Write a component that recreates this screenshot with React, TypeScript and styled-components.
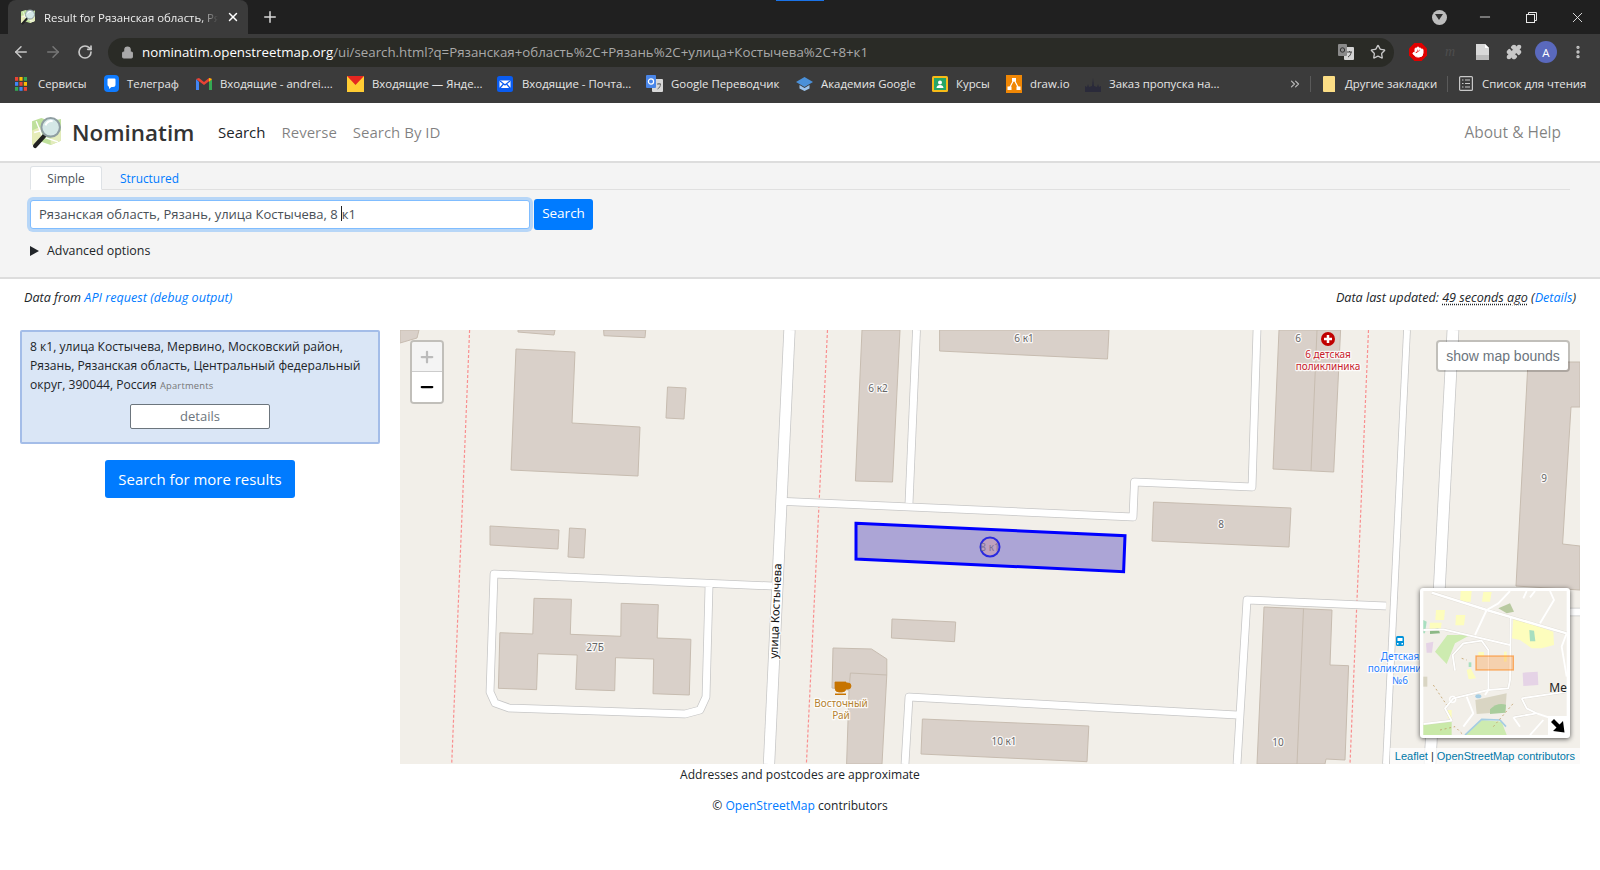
import React from "react";
import styled, { createGlobalStyle } from "styled-components";
import { ArrowLeft, ArrowRight, RotateCw, Lock, Star, Puzzle, Plus, X, Minus, EllipsisVertical, ChevronsRight, Hand } from "lucide-react";

const sans = `"Open Sans", "Noto Sans", sans-serif`;

const Global = createGlobalStyle`
  html, body { margin: 0; padding: 0; background: #fff; }
  body { font-family: ${sans}; width: 1600px; height: 870px; overflow: hidden; color: #212529; }
  * { box-sizing: border-box; }
`;

const Page = styled.div`display: flex; flex-direction: column; width: 1600px; height: 870px;`;

/* browser chrome */
const TabStrip = styled.div`position: relative; height: 34px; background: #202020; display: flex; align-items: flex-end; padding-left: 8px; color: #fff;`;
const Loading = styled.div`position: absolute; left: 776px; top: 0; width: 48px; height: 1px; background: #1a73e8;`;
const Tab = styled.div`
  width: 240px; height: 34px; background: #3b3b3b; border-radius: 8px 8px 0 0;
  display: flex; align-items: center; padding: 0 8px 0 12px; font-size: 11.4px; gap: 8px;
`;
const TabTitle = styled.span`
  flex: 1; overflow: hidden; white-space: nowrap; color: #eee;
  -webkit-mask-image: linear-gradient(90deg, #000 90%, transparent);
  mask-image: linear-gradient(90deg, #000 90%, transparent);
`;
const NewTab = styled.div`margin-left: 13px; display: flex; align-self: center; color: #d8d8d8;`;
const WinControls = styled.div`margin-left: auto; align-self: center; display: flex; align-items: center; color: #e8e8e8;`;
const WinButton = styled.div`width: 46px; display: flex; justify-content: center;`;
const ProfileDrop = styled.div`width: 15px; height: 15px; border-radius: 50%; background: #bdbdbd; display: flex; align-items: center; justify-content: center;`;
const DropTri = styled.div`width: 0; height: 0; border-left: 4px solid transparent; border-right: 4px solid transparent; border-top: 6px solid #303030;`;

const Toolbar = styled.div`height: 36px; background: #3b3b3b; display: flex; align-items: center; padding-left: 5px; color: #c8c8c8;`;
const NavButton = styled.div<{ $dim?: boolean }>`width: 32px; display: flex; justify-content: center; color: ${(p) => (p.$dim ? "#777" : "#c8c8c8")};`;
const Omnibox = styled.div`
  width: 1286px; height: 29px; margin-left: 7px; border-radius: 15px; background: #2a2b26;
  display: flex; align-items: center; padding: 0 8px 0 13px; font-size: 13.3px; white-space: nowrap; color: #a9a9a9;
`;
const LockWrap = styled.span`display: flex; margin-right: 8px; color: #a9a9a9;`;
const Host = styled.span`color: #fff;`;
const OmniIcons = styled.div`margin-left: auto; display: flex; align-items: center; gap: 16px; color: #c8c8c8;`;
const ExtRow = styled.div`display: flex; align-items: center; margin-left: 8px;`;
const Ext = styled.div`width: 32px; display: flex; justify-content: center; align-items: center; color: #c8c8c8;`;
const StopSign = styled.div`
  width: 18px; height: 18px; background: #e00000; color: #fff; display: flex; align-items: center; justify-content: center;
  clip-path: polygon(30% 0, 70% 0, 100% 30%, 100% 70%, 70% 100%, 30% 100%, 0 70%, 0 30%);
`;
const DimM = styled.span`font-style: italic; font-size: 14px; color: #4e4e4e; font-family: "Liberation Serif", serif;`;
const Avatar = styled.div`width: 22px; height: 22px; border-radius: 50%; background: #5a69bd; color: #fff; display: flex; align-items: center; justify-content: center; font-size: 11.5px;`;

const BookmarkBar = styled.div`height: 33px; background: #3b3b3b; display: flex; align-items: center; padding: 0 0 6px 15px; font-size: 11.4px; color: #e6e6e6; white-space: nowrap;`;
const Bookmark = styled.div<{ $w: number; $gap?: number; $ml?: number }>`
  width: ${(p) => p.$w}px; margin-left: ${(p) => p.$ml ?? 0}px; flex: none; display: flex; align-items: center; gap: ${(p) => p.$gap ?? 8}px;
`;
const BarSep = styled.div`width: 1px; height: 16px; background: #5a5a5a; flex: none;`;
const More = styled.div`margin-left: -2px; width: 22px; flex: none; color: #b9b9b9; display: flex;`;

/* site header */
const Header = styled.header`height: 60px; border-bottom: 2px solid #ddd; display: flex; align-items: center; padding: 0 39px 0 30px; background: #fff;`;
const Brand = styled.div`display: flex; align-items: center; font-size: 22.4px; font-weight: 600; color: #333; width: 188px; gap: 9px;`;
const NavLink = styled.a<{ $active?: boolean }>`font-size: 15px; color: ${(p) => (p.$active ? "#212529" : "rgba(0,0,0,.5)")}; margin-right: 16px;`;
const NavRight = styled.a`margin-left: auto; font-size: 15.5px; color: rgba(0,0,0,.5);`;

/* search */
const SearchPanel = styled.section`height: 116px; background: #f4f4f4; border-bottom: 2px solid #ddd; padding: 3px 30px 0; font-size: 13px;`;
const Tabs = styled.div`display: flex; height: 24px; border-bottom: 1px solid #e0e0e0;`;
const TabLink = styled.a<{ $active?: boolean }>`
  height: 24px; display: flex; align-items: center; justify-content: center; font-size: 11.9px;
  ${(p) => p.$active ? "width:72px;background:#fff;border:1px solid #dee2e6;border-bottom:1px solid #fff;border-radius:3px 3px 0 0;color:#495057;" : "color:#007bff;width:95px;"}
`;
const SearchRow = styled.div`display: flex; gap: 4px; margin-top: 9px; align-items: center;`;
const FakeInput = styled.div`
  width: 500px; height: 29px; background: #fff; border: 1px solid #80bdff; border-radius: 3px;
  box-shadow: 0 0 0 3px rgba(0,123,255,.25); padding: 0 8px 2px; display: flex; align-items: center; font-size: 13px; color: #495057; white-space: nowrap;
`;
const Caret = styled.span`display: inline-block; width: 1px; height: 15px; background: #222; margin: 0 0 0 3px; vertical-align: middle;`;
const SearchBtn = styled.div`width: 59px; height: 31px; background: #007bff; color: #fff; border-radius: 3px; font-size: 13.5px; display: flex; align-items: center; justify-content: center; padding-bottom: 3px;`;
const Advanced = styled.div`display: flex; align-items: center; gap: 8px; margin-top: 12px; font-size: 12.4px; color: #212529;`;
const Triangle = styled.span`width: 0; height: 0; border-top: 5.5px solid transparent; border-bottom: 5.5px solid transparent; border-left: 9px solid #212529;`;

const Meta = styled.div`height: 51px; display: flex; justify-content: space-between; align-items: flex-start; padding: 10px 24px 0 24px; font-size: 12.6px; line-height: 17px; font-style: italic; color: #212529;`;
const Link = styled.a`color: #007bff;`;
const Abbr = styled.span`text-decoration: underline dotted #212529; text-underline-offset: 2px;`;

const Content = styled.div`display: grid; grid-template-columns: 360px 1180px; column-gap: 20px; padding-left: 20px;`;
const Side = styled.div`display: flex; flex-direction: column; align-items: center;`;
const Result = styled.div`
  width: 360px; height: 114px; background: #dae6f6; border: 2px solid #a4bde8; border-radius: 2px;
  padding: 5px 8px; font-size: 12.1px; line-height: 19px; color: #212529;
`;
const Kind = styled.span`font-size: 9.4px; color: #777; letter-spacing: .2px;`;
const DetailsBtn = styled.div`width: 140px; height: 25px; margin: 9px auto 0; background: #fff; border: 1px solid #6c757d; border-radius: 2px; color: #6c757d; font-size: 13px; display: flex; align-items: center; justify-content: center;`;
const MoreBtn = styled.div`margin-top: 16px; width: 190px; height: 38px; background: #007bff; color: #fff; border-radius: 3px; font-size: 14.95px; display: flex; align-items: center; justify-content: center;`;

const MapBox = styled.div`position: relative; width: 1180px; height: 434px; overflow: hidden; background: #f2efe9;`;
const MapSvg = styled.svg`display: block; width: 1180px; height: 434px; font-family: "Noto Sans", "DejaVu Sans", sans-serif;`;
const ZoomCtl = styled.div`position: absolute; left: 10px; top: 10px; width: 34px; height: 64px; border: 2px solid rgba(0,0,0,.2); border-radius: 4px; background-clip: padding-box; overflow: hidden;`;
const ZoomBtn = styled.div<{ $off?: boolean }>`
  height: 30px; display: flex; align-items: center; justify-content: center; color: ${(p) => (p.$off ? "#bbb" : "#000")};
  background: ${(p) => (p.$off ? "#f4f4f4" : "#fff")}; ${(p) => p.$off && "border-bottom: 1px solid #ccc;"}
`;
const BoundsBtn = styled.div`position: absolute; right: 10px; top: 10px; width: 134px; height: 32px; background: #fff; border: 2px solid rgba(0,0,0,.2); border-radius: 4px; background-clip: padding-box; font-size: 14px; color: #6c757d; display: flex; align-items: center; justify-content: center; font-family: "Liberation Sans", sans-serif;`;
const Mini = styled.div`position: absolute; right: 10px; bottom: 26px; width: 150px; height: 150px; background: #fff; border-radius: 3px; padding: 3px; box-shadow: 0 1px 5px rgba(0,0,0,.65);`;
const MiniSvg = styled.svg`display: block; width: 144px; height: 144px; font-family: "Noto Sans", sans-serif;`;
const MiniToggle = styled.div`position: absolute; right: 3px; bottom: 3px; width: 19px; height: 19px; background: #fff; display: flex; align-items: center; justify-content: center;`;
const Attribution = styled.div`position: absolute; right: 0; bottom: 0; background: rgba(255,255,255,.7); padding: 0 5px; height: 16px; font-size: 11px; line-height: 16px; color: #333; font-family: "Liberation Sans", sans-serif;`;
const AttrLink = styled.a`color: #0078a8;`;

const Footer = styled.footer`text-align: center; font-size: 12.05px; color: #212529; padding-top: 1px;`;
const FootLine = styled.p<{ $mt: number }>`margin: ${(p) => p.$mt}px 0 0; line-height: 20px;`;

const Favicon = ({ size = 16 }: { size?: number }) => (
  <svg width={size} height={size} viewBox="0 0 32 32">
    <path d="M2 5 L11 2 L20 5 L30 3 L30 24 L20 28 L11 25 L2 28 Z" fill="#bfe09c" />
    <path d="M2 14 L11 10 L11 25 L2 28 Z" fill="#e6ecb8" />
    <path d="M20 18 L30 14 L30 24 L20 28 Z" fill="#e3ebbc" />
    <path d="M6 5 L12 20 M12 20 L27 25 M4 16 L12 14" stroke="#fff" strokeWidth="1.3" fill="none" />
    <path d="M14 19 L5 29" stroke="#222" strokeWidth="4.2" strokeLinecap="round" />
    <circle cx="20" cy="11" r="9" fill="#d6e8ee" fillOpacity=".9" stroke="#8f9ea2" strokeWidth="2" />
    <path d="M15 9 A6.5 6.5 0 0 1 22 5" stroke="#fff" strokeWidth="2" fill="none" />
  </svg>
);

const Apps = () => (
  <svg width="12" height="14" viewBox="0 0 12 14">
    {["#ea4335", "#fbbc05", "#34a853", "#4285f4", "#ea4335", "#fbbc05", "#34a853", "#4285f4", "#ea4335"].map((c, i) => (
      <rect key={i} x={(i % 3) * 4.4} y={Math.floor(i / 3) * 5} width="3.2" height="3.8" fill={c} />
    ))}
  </svg>
);
const Telegraph = () => (
  <svg width="15" height="17" viewBox="0 0 15 17"><rect width="15" height="17" rx="4" fill="#0f7bff" /><path d="M3.5 4.5a1 1 0 0 1 1-1h6a1 1 0 0 1 1 1v5a2.5 2.5 0 0 1-2.5 2.5H7.5L5 14v-2.2A2.5 2.5 0 0 1 3.5 9.500z" fill="#fff" /></svg>
);
const Gmail = () => (
  <svg width="16" height="13" viewBox="0 0 16 13"><path d="M0 2v11h3V5z" fill="#4285f4" /><path d="M16 2v11h-3V5z" fill="#34a853" /><path d="M0 2l3-1 5 4 5-4 3 1-8 6z" fill="#ea4335" /><path d="M13 1l3 1-3 3z" fill="#fbbc05" /></svg>
);
const YandexMail = () => (
  <svg width="17" height="16" viewBox="0 0 17 16"><rect width="17" height="16" fill="#fc3" /><path d="M0 0h17L8.5 9z" fill="#e52620" /></svg>
);
const MailRu = () => (
  <svg width="16" height="16" viewBox="0 0 16 16"><rect width="16" height="16" rx="2.5" fill="#0a5cf0" /><rect x="2.5" y="4.5" width="11" height="7.5" rx="1" fill="#fff" /><path d="M3 5l5 4 5-4M3 12l3.5-4M13 12L9.5 8" stroke="#0a5cf0" strokeWidth="1.2" fill="none" /></svg>
);
const GTranslate = () => (
  <svg width="17" height="17" viewBox="0 0 17 17"><rect x="6" y="4" width="11" height="13" rx="1" fill="#d8d8d8" /><rect width="10" height="13" rx="1" fill="#4a86e8" /><circle cx="5" cy="6.5" r="2.6" fill="none" stroke="#fff" strokeWidth="1.2" /><path d="M11 9h4M13 8v1M11.5 14c2-1 3-3 3-5" stroke="#666" fill="none" /></svg>
);
const Cap = () => (
  <svg width="17" height="17" viewBox="0 0 17 17"><path d="M8.5 2L17 7l-8.5 5L0 7z" fill="#4a90d9" /><path d="M3.5 10v3.5l5 2.5 5-2.5V10l-5 3z" fill="#9cc3ec" /></svg>
);
const Classroom = () => (
  <svg width="16" height="16" viewBox="0 0 16 16"><rect width="16" height="16" rx="1.5" fill="#f6bb18" /><rect x="2" y="2" width="12" height="12" fill="#25a667" /><circle cx="8" cy="6.5" r="2" fill="#fff" /><path d="M4.5 12c0-4 7-4 7 0z" fill="#fff" /></svg>
);
const DrawIo = () => (
  <svg width="16" height="18" viewBox="0 0 16 18"><rect width="16" height="18" fill="#f08705" /><path d="M8 4.5L3.5 13M8 4.5l4.5 8.500" stroke="#fff" strokeWidth="1.2" /><rect x="6" y="3" width="4" height="3.5" fill="#fff" /><rect x="1.5" y="11.5" width="4" height="3.5" fill="#fff" /><rect x="10.5" y="11.5" width="4" height="3.5" fill="#fff" /></svg>
);
const Castle = () => (
  <svg width="16" height="17" viewBox="0 0 16 17"><path d="M0 17v-6l2 1 1-3 1 3 3-1 1-8 1 8 3 1 1-3 1 3 2-1v6z" fill="#2a2a3a" /></svg>
);
const Folder = () => (
  <svg width="12" height="16" viewBox="0 0 12 16"><path d="M0 1a1 1 0 0 1 1-1h10a1 1 0 0 1 1 1v15H1a1 1 0 0 1-1-1z" fill="#fbdd85" /></svg>
);
const ReadList = () => (
  <svg width="14" height="15" viewBox="0 0 14 15" fill="none" stroke="#c8c8c8" strokeWidth="1.2"><rect x=".6" y=".6" width="12.8" height="13.8" rx="1" /><path d="M3 4h1.5M6 4h5M3 7.5h1.5M6 7.5h5M3 11h1.5M6 11h5" /></svg>
);
const TranslateIcon = () => (
  <svg width="16" height="16" viewBox="0 0 16 16"><rect x="6" y="3" width="10" height="13" rx="1" fill="#d4d4d4" /><rect width="9" height="12" rx="1" fill="#8a8a8a" /><circle cx="4.5" cy="6" r="2.2" fill="none" stroke="#333" /><path d="M9 8h5M11.5 7v1M10 13c2-1 3-3 3-5" stroke="#444" fill="none" /></svg>
);
const Doc = () => (
  <svg width="13" height="16" viewBox="0 0 13 16"><path d="M0 0h9l4 4v12H0z" fill="#d8d8d8" /><path d="M9 0l4 4H9z" fill="#fff" /><rect y="11" width="13" height="5" fill="#bbb" /></svg>
);
const Restore = () => (
  <svg width="11" height="11" viewBox="0 0 11 11" fill="none" stroke="#e8e8e8"><rect x=".5" y="2.5" width="8" height="8" /><path d="M2.5 2.5V.5h8v8H8.5" /></svg>
);

const Label = ({ x, y, c = "#666", s = 10, plain, children }: { x: number; y: number; c?: string; s?: number; plain?: boolean; children: React.ReactNode }) => (
  <text
    x={x} y={y} fontSize={s} fill={c} textAnchor="middle" dominantBaseline="central"
    paintOrder="stroke" strokeLinejoin="round"
    stroke={plain ? "none" : "rgba(255,255,255,.85)"} strokeWidth={plain ? 0 : 2.5}
  >{children}</text>
);

const Road = ({ d, w }: { d: string; w: number }) => (
  <path d={d} fill="none" stroke="#c6c6c6" strokeWidth={w + 1.5} strokeLinejoin="round" />
);
const RoadFill = ({ d, w }: { d: string; w: number }) => (
  <path d={d} fill="none" stroke="#fff" strokeWidth={w} strokeLinejoin="round" />
);

const roads: [string, number][] = [
  ["M789.5 330 L769 764", 10.5],
  ["M916.5 330 L909 503", 7],
  ["M786 501.5 L1133 517 L1134.5 482 L1252 487 L1257 330", 7],
  ["M1407 330 L1386 764", 6],
  ["M1453 330 L1430 764", 11],
  ["M1386 606 L1247 600 L1237 764", 7],
  ["M1237 715 L909 697 L905 764", 7],
  ["M1540 612 L1580 612", 7],
  ["M772 586 L494 574 L490 692 L495 703 L509 708 L685 714 L700 710 L706 697 L709 587", 7],
];

const Buildings = [
  "400,343 417,338 419,330 400,330",
  "516,349 575,352 572,423 640,427 638,476 511,470",
  "667.5,387 686,388 684,419 666,418",
  "862,330 900,330 892.5,482 855.4,481",
  "518,330 555,330 554,335 518,332",
  "603.6,330 645.7,330 645,337.7 604,335.7",
  "490,526 559,530 558,549 490,545",
  "569.5,528 585.6,529 584,558 568,557",
  "939.6,330 1109,330 1107.5,359 939.6,351",
  "1279,330 1340.6,330 1333.7,472 1273,469",
  "1153.5,502 1291,508 1289,547 1152,541",
  "1528,362 1580,362 1580,407 1571,407 1562.6,544 1580,546 1580,590 1516,586",
  "534,598.3 571.4,599.3 570.3,634.3 620.8,636.3 621.2,603.3 658.3,604.7 657.2,638 690.9,639.3 689.3,695 653,693.7 653.7,659 615.5,657.7 614.7,690.7 575.7,689.3 577.2,655 537.8,653.7 536.6,689.7 498.4,688.3 499.9,632.7 532.8,634",
  "892,619 955.7,622 954.5,641.7 891.4,638",
  "833,648 871.5,649 886.8,659 886.8,675 882,764 846.6,764 849,690 832,688",
  "922.4,719 1088.8,726 1087,761.7 921,754",
  "1264,607 1332,610 1330,665 1348.6,665.7 1345,760 1326,759 1325,764 1257,764",
];

const MiniMap = () => (
  <MiniSvg viewBox="40 33 430 432">
    <rect x="40" y="33" width="430" height="432" fill="#f2efe9" />
    <path d="M75 215 L112 165 L180 165 L135 190 L110 252Z" fill="#cdebb0" />
    <path d="M40 430 L125 425 L125 465 L40 465Z" fill="#c9e9a8" />
    <path d="M165 465 L215 420 L275 425 L290 465Z" fill="#cdebb0" />
    <path d="M165 465 L215 418 L270 420 L288 440" fill="none" stroke="#a5cde3" strokeWidth="5" />
    <path d="M196 360 L290 340 L286 396 L200 402Z" fill="#d9d5c3" />
    <path d="M240 388 Q262 366 288 374 L286 398 L240 402Z" fill="#a9cd9c" />
    <path d="M338 278 L383 275 L385 315 L340 318Z" fill="#e5d3e6" />
    <path d="M48 190 L70 185 L66 218 L50 218Z" fill="#e5d3e6" />
    <path d="M40 290 L52 290 L52 320 L40 320Z" fill="#d9d5c3" />
    <g fill="#fdfdbd">
      <path d="M152 33 H185 L182 65 H150Z" />
      <path d="M220 36 H245 L240 65 H216Z" />
      <path d="M78 90 H105 L102 120 H76Z" />
      <path d="M138 105 H166 L162 136 H136Z" />
      <path d="M60 128 H95 L92 150 H58Z" />
      <path d="M310 115 L345 125 L430 155 L432 195 L395 205 L365 205 L330 180 L306 175Z" />
      <path d="M282 215 H290 V245 H282Z" />
      <path d="M170 270 L182 265 L198 295 L176 298Z" />
      <path d="M113 390 H125 V415 H113Z" />
      <path d="M205 216 H222 V228 H205Z" />
    </g>
    <path d="M358 150 L372 152 L376 184 L360 184Z" fill="#a8dfc0" />
    <path d="M40 120 L50 125 L45 160 L40 160Z" fill="#a8dfc0" />
    <path d="M60 150 L85 145 L90 160 L60 162Z" fill="#8cb886" />
    <path d="M265 85 L300 70 L312 95 L290 100Z" fill="#b8c9a0" />
    <g fill="none" stroke="#d8d4cc" strokeWidth="8" strokeLinejoin="round" opacity=".7">
      <path d="M65 38 L230 90 L470 160" strokeWidth="10" />
      <path d="M40 150 L100 148 L300 195" />
      <path d="M302 110 L300 300 L295 325 L235 330 L130 355 L105 385 L125 422 L40 432" />
      <path d="M135 272 L128 225 L160 190 L215 182 L235 210 L235 330" />
      <path d="M335 355 L470 335 M335 355 L350 385 L380 400 L350 405 L310 412" />
    </g>
    <g fill="none" stroke="#fff" strokeWidth="5.5" strokeLinejoin="round">
      <path d="M65 38 L230 90 L470 160" strokeWidth="7.5" />
      <path d="M40 150 L100 148 L300 195" />
      <path d="M230 90 L195 165" />
      <path d="M300 33 L265 70 L230 90" />
      <path d="M302 110 L300 300 L295 325 L235 330 L130 355 L105 385 L125 422 L40 432" />
      <path d="M135 272 L128 225 L160 190 L215 182 L235 210 L235 330 L225 345" />
      <path d="M335 355 L470 335" />
      <path d="M335 355 L350 385 L380 400 L350 405 L310 412" />
      <path d="M380 400 L470 430 M400 420 L360 465 M310 412 L330 440" />
      <path d="M470 160 L455 200 L470 290" />
      <path d="M390 130 L432 60 L420 33 M350 33 L340 55 M375 33 L360 52" />
      <path d="M170 350 L190 400 L160 440" />
    </g>
    <g stroke="#c2a06a" strokeWidth="2.5" strokeDasharray="6 8" fill="none">
      <path d="M70 315 L110 375 M155 235 L170 240 M90 450 L135 440 L160 465 M250 440 L310 370" />
    </g>
    <circle cx="128" cy="358" r="9" fill="none" stroke="#fff" strokeWidth="4" />
    <ellipse cx="205" cy="349" rx="9" ry="6" fill="#a5cde3" />
    <rect x="176" y="247" width="8" height="14" fill="#a8dfc0" />
    <rect x="198" y="228" width="112" height="42" fill="#ff7800" fillOpacity=".25" stroke="#ff7800" strokeOpacity=".55" strokeWidth="4" />
    <text x="418" y="336" fontSize="36" fill="#222">Ме</text>
  </MiniSvg>
);

export default function App() {
  return (
    <Page>
      <Global />
      <TabStrip>
        <Loading />
        <Tab>
          <Favicon />
          <TabTitle>Result for Рязанская область, Ря</TabTitle>
          <X size={14} strokeWidth={2.5} />
        </Tab>
        <NewTab><Plus size={18} strokeWidth={2} /></NewTab>
        <WinControls>
          <WinButton><ProfileDrop><DropTri /></ProfileDrop></WinButton>
          <WinButton><Minus size={16} strokeWidth={1.3} /></WinButton>
          <WinButton><Restore /></WinButton>
          <WinButton><X size={17} strokeWidth={1.3} /></WinButton>
        </WinControls>
      </TabStrip>
      <Toolbar>
        <NavButton><ArrowLeft size={18} /></NavButton>
        <NavButton $dim><ArrowRight size={18} /></NavButton>
        <NavButton><RotateCw size={16} strokeWidth={2.5} /></NavButton>
        <Omnibox>
          <LockWrap><Lock size={13} fill="#a9a9a9" /></LockWrap>
          <Host>nominatim.openstreetmap.org</Host>
          /ui/search.html?q=Рязанская+область%2C+Рязань%2C+улица+Костычева%2C+8+к1
          <OmniIcons>
            <TranslateIcon />
            <Star size={16} />
          </OmniIcons>
        </Omnibox>
        <ExtRow>
          <Ext><StopSign><Hand size={12} fill="#fff" /></StopSign></Ext>
          <Ext><DimM>m</DimM></Ext>
          <Ext><Doc /></Ext>
          <Ext><Puzzle size={16} fill="#c8c8c8" /></Ext>
          <Ext><Avatar>A</Avatar></Ext>
          <Ext><EllipsisVertical size={16} strokeWidth={3} /></Ext>
        </ExtRow>
      </Toolbar>
      <BookmarkBar>
        <Bookmark $w={89} $gap={11}><Apps />Сервисы</Bookmark>
        <Bookmark $w={92}><Telegraph />Телеграф</Bookmark>
        <Bookmark $w={151}><Gmail />Входящие - andrei....</Bookmark>
        <Bookmark $w={150}><YandexMail />Входящие — Янде...</Bookmark>
        <Bookmark $w={149} $gap={9}><MailRu />Входящие - Почта...</Bookmark>
        <Bookmark $w={150}><GTranslate />Google Переводчик</Bookmark>
        <Bookmark $w={136}><Cap />Академия Google</Bookmark>
        <Bookmark $w={74}><Classroom />Курсы</Bookmark>
        <Bookmark $w={79}><DrawIo />draw.io</Bookmark>
        <Bookmark $w={205}><Castle />Заказ пропуска на...</Bookmark>
        <More><ChevronsRight size={14} /></More>
        <BarSep />
        <Bookmark $w={124} $ml={12} $gap={10}><Folder />Другие закладки</Bookmark>
        <BarSep />
        <Bookmark $w={140} $ml={11} $gap={9}><ReadList />Список для чтения</Bookmark>
      </BookmarkBar>

      <Header>
        <Brand><Favicon size={33} />Nominatim</Brand>
        <NavLink $active>Search</NavLink>
        <NavLink>Reverse</NavLink>
        <NavLink>Search By ID</NavLink>
        <NavRight>About &amp; Help</NavRight>
      </Header>

      <SearchPanel>
        <Tabs>
          <TabLink $active>Simple</TabLink>
          <TabLink>Structured</TabLink>
        </Tabs>
        <SearchRow>
          <FakeInput>Рязанская область, Рязань, улица Костычева, 8<Caret />к1</FakeInput>
          <SearchBtn>Search</SearchBtn>
        </SearchRow>
        <Advanced><Triangle />Advanced options</Advanced>
      </SearchPanel>

      <Meta>
        <span>Data from <Link>API request</Link> <Link>(debug output)</Link></span>
        <span>Data last updated: <Abbr>49 seconds ago</Abbr> (<Link>Details</Link>)</span>
      </Meta>

      <Content>
        <Side>
          <Result>
            8 к1, улица Костычева, Мервино, Московский район, Рязань, Рязанская область, Центральный федеральный округ, 390044, Россия <Kind>Apartments</Kind>
            <DetailsBtn>details</DetailsBtn>
          </Result>
          <MoreBtn>Search for more results</MoreBtn>
        </Side>
        <MapBox>
          <MapSvg viewBox="400 330 1180 434">
            <rect x="400" y="330" width="1180" height="434" fill="#f2efe9" />
            <g fill="none" stroke="#f98f8f" strokeWidth="1.2" strokeDasharray="3 2">
              <path d="M469.6 330 L451.7 764" />
              <path d="M827.5 330 L806.4 764" />
              <path d="M1368.5 330 L1350 764" />
            </g>
            {roads.map(([d, w], i) => <Road key={i} d={d} w={w} />)}
            {roads.map(([d, w], i) => <RoadFill key={i} d={d} w={w} />)}
            <g fill="#d9d0c9" stroke="#c7bcb0" strokeWidth="1">
              {Buildings.map((p, i) => <polygon key={i} points={p} />)}
            </g>
            <g fill="none" stroke="#c7bcb0" strokeWidth="1">
              <path d="M1317 330 L1311 471" />
              <path d="M850.4 673 L886.8 675 M850.4 673 L849 690" />
              <path d="M1303.5 608.7 L1297 764" />
            </g>
            <polygon points="856,523.3 1125,535.7 1123.6,571.7 856,559" fill="#aca5d6" stroke="#0000ff" strokeWidth="3" />
            <circle cx="990" cy="547" r="9.5" fill="#bea1c0" stroke="#2a2ae0" strokeWidth="2" />
            <Label x={990} y={547} c="#7d7296" plain>8 к1</Label>
            <Label x={878} y={388}>6 к2</Label>
            <Label x={1024} y={338}>6 к1</Label>
            <Label x={1298} y={338}>6</Label>
            <Label x={1221} y={524}>8</Label>
            <Label x={1544} y={478}>9</Label>
            <Label x={595} y={647}>27Б</Label>
            <Label x={1004} y={741}>10 к1</Label>
            <Label x={1278} y={742}>10</Label>
            <circle cx="1328" cy="339" r="7" fill="#c00000" />
            <path d="M1328 335 V343 M1324 339 H1332" stroke="#fff" strokeWidth="2.5" />
            <Label x={1328} y={354} c="#c8202a">6 детская</Label>
            <Label x={1328} y={366} c="#c8202a">поликлиника</Label>
            <text
              transform="translate(775 611) rotate(-87.5)" fontSize="11.5" textAnchor="middle" dominantBaseline="central" fill="#111"
              paintOrder="stroke" stroke="rgba(255,255,255,.85)" strokeWidth="2.5" strokeLinejoin="round"
            >улица Костычева</text>
            <path d="M835 682 h11 v6 a4 4 0 0 1 -4 4 h-3 a4 4 0 0 1 -4 -4z M846 683 h2 a2.5 2.5 0 0 1 0 6 h-2" fill="#c77400" stroke="#c77400" strokeWidth=".8" />
            <rect x="835" y="693.5" width="11" height="1.5" fill="#c77400" />
            <Label x={841} y={703} c="#b5822f">Восточный</Label>
            <Label x={841} y={715} c="#b5822f">Рай</Label>
            <rect x="1396" y="636" width="8" height="10" rx="1.5" fill="#0092da" />
            <rect x="1397.5" y="638" width="5" height="3" fill="#fff" />
            <rect x="1397" y="643" width="1.5" height="1.5" fill="#fff" /><rect x="1401.5" y="643" width="1.5" height="1.5" fill="#fff" />
            <Label x={1400} y={656} c="#2a7fff">Детская</Label>
            <Label x={1400} y={668} c="#2a7fff">поликлиника</Label>
            <Label x={1400} y={680} c="#2a7fff">№6</Label>
          </MapSvg>
          <ZoomCtl>
            <ZoomBtn $off><Plus size={18} strokeWidth={3} /></ZoomBtn>
            <ZoomBtn><Minus size={18} strokeWidth={3} /></ZoomBtn>
          </ZoomCtl>
          <BoundsBtn>show map bounds</BoundsBtn>
          <Mini>
            <MiniMap />
            <MiniToggle>
              <svg width="14" height="14" viewBox="0 0 14 14"><path d="M0 3 L3 0 L8.5 5.5 L12 2 L13.5 13.5 L2 12 L5.5 8.5Z" fill="#000" /></svg>
            </MiniToggle>
          </Mini>
          <Attribution><AttrLink>Leaflet</AttrLink> | <AttrLink>OpenStreetMap contributors</AttrLink></Attribution>
        </MapBox>
      </Content>

      <Footer>
        <FootLine $mt={0}>Addresses and postcodes are approximate</FootLine>
        <FootLine $mt={11}>© <Link>OpenStreetMap</Link> contributors</FootLine>
      </Footer>
    </Page>
  );
}
